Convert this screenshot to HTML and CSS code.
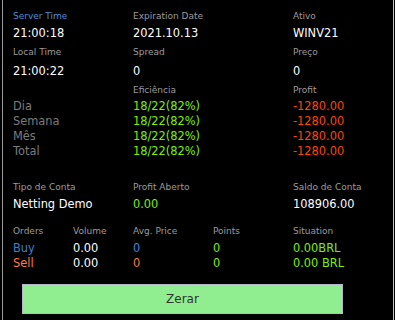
FILE: index.html
```html
<!DOCTYPE html>
<html>
<head>
<meta charset="utf-8">
<link rel="stylesheet" href="styles.css">
</head>
<body>
<div class="panel">
  <div class="grid3 top">
    <div class="lbl blue">Server Time</div>
    <div class="lbl">Expiration Date</div>
    <div class="lbl">Ativo</div>
    <div class="val">21:00:18</div>
    <div class="val">2021.10.13</div>
    <div class="val">WINV21</div>
    <div class="lbl">Local Time</div>
    <div class="lbl">Spread</div>
    <div class="lbl">Preço</div>
    <div class="val">21:00:22</div>
    <div class="val">0</div>
    <div class="val">0</div>
  </div>
  <div class="grid3 stats">
    <div></div>
    <div class="lbl">Eficiência</div>
    <div class="lbl">Profit</div>
    <div class="row-name">Dia</div><div class="val green">18/22(82%)</div><div class="val red">-1280.00</div>
    <div class="row-name">Semana</div><div class="val green">18/22(82%)</div><div class="val red">-1280.00</div>
    <div class="row-name">Mês</div><div class="val green">18/22(82%)</div><div class="val red">-1280.00</div>
    <div class="row-name">Total</div><div class="val green">18/22(82%)</div><div class="val red">-1280.00</div>
  </div>
  <div class="grid3 account">
    <div class="lbl">Tipo de Conta</div>
    <div class="lbl">Profit Aberto</div>
    <div class="lbl">Saldo de Conta</div>
    <div class="val">Netting Demo</div>
    <div class="val green">0.00</div>
    <div class="val">108906.00</div>
  </div>
  <div class="grid5 orders">
    <div class="lbl">Orders</div>
    <div class="lbl">Volume</div>
    <div class="lbl">Avg. Price</div>
    <div class="lbl">Points</div>
    <div class="lbl">Situation</div>
    <div class="val buy">Buy</div>
    <div class="val">0.00</div>
    <div class="val buy2">0</div>
    <div class="val green">0</div>
    <div class="val green">0.00BRL</div>
    <div class="val sell">Sell</div>
    <div class="val">0.00</div>
    <div class="val sell">0</div>
    <div class="val green">0</div>
    <div class="val green">0.00 BRL</div>
  </div>
  <button class="zerar">Zerar</button>
</div>
</body>
</html>
```

FILE: styles.css
```css
html, body {
  margin: 0;
  padding: 0;
  background: #000;
  height: 320px;
  overflow: hidden;
}
.panel {
  margin: 0 1px 0 2px;
  border-left: 1px solid #9a9a9a;
  border-right: 1px solid #c8c8c8;
  height: 320px;
  box-sizing: border-box;
  padding: 7px 0 0 10px;
  font-family: "DejaVu Sans", sans-serif;
  color: #fff;
}
.grid3 {
  display: grid;
  grid-template-columns: 120px 160px 1fr;
}
.grid5 {
  display: grid;
  grid-template-columns: 60px 60px 80px 80px 1fr;
}
.top {
  grid-template-rows: 18px 16px 22px 16px;
}
.stats {
  margin-top: 2px;
  grid-template-rows: 18px repeat(4, 14.75px);
}
.account {
  margin-top: 19px;
  grid-template-rows: 19px 16px;
}
.orders {
  margin-top: 10px;
  grid-template-rows: 18px 15px 15px;
}
.lbl {
  font-size: 9px;
  color: #9c9c9c;
  display: flex;
  align-items: center;
  white-space: nowrap;
}
.val {
  font-size: 11.4px;
  color: #fff;
  display: flex;
  align-items: center;
  white-space: nowrap;
}
.row-name {
  font-size: 11.4px;
  color: #7c7c7c;
  display: flex;
  align-items: center;
}
.blue { color: #4a90d8; }
.green { color: #7cf000; }
.red { color: #ff4500; }
.buy { color: #3c82c8; }
.buy2 { color: #3c8ad8; }
.sell { color: #ff7a45; }
.zerar {
  display: block;
  margin: 14px 0 0 9px;
  width: 321px;
  height: 30px;
  background: #90ee90;
  border: 1px solid #b4b8cc;
  border-radius: 0;
  font-family: "DejaVu Sans", sans-serif;
  font-size: 12px;
  color: #333;
  padding: 0;
}
```
